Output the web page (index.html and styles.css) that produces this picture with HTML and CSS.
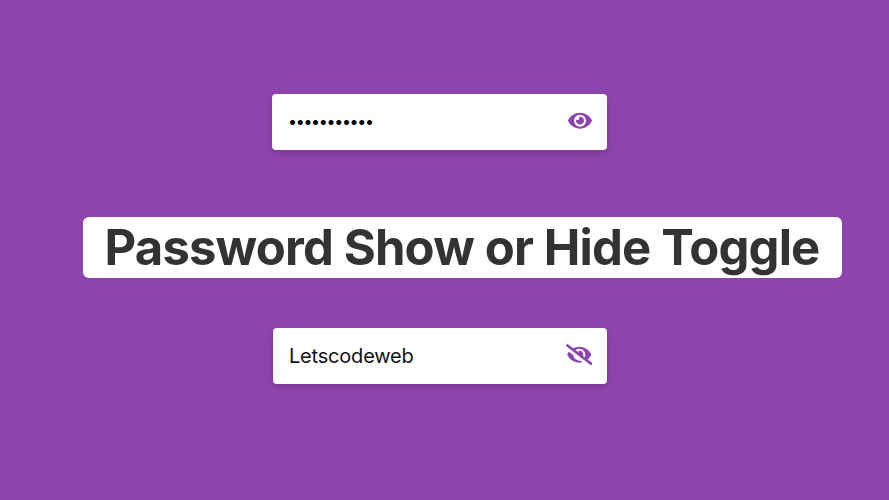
FILE: index.html
```html
<!DOCTYPE html>
<html lang="en">
<head>
<meta charset="utf-8">
<title>Password Show or Hide Toggle</title>
<link rel="stylesheet" href="styles.css">
</head>
<body>
<main class="page">
  <div class="field field-hidden">
    <span class="dots">•••••••••••</span>
    <svg class="eye" viewBox="0 0 576 512"><path d="M572.52 241.4C518.29 135.59 410.93 64 288 64S57.68 135.64 3.48 241.41a32.35 32.35 0 0 0 0 29.19C57.71 376.41 165.07 448 288 448s230.32-71.64 284.52-177.41a32.35 32.35 0 0 0 0-29.19zM288 400a144 144 0 1 1 144-144 143.93 143.93 0 0 1-144 144zm0-240a95.31 95.31 0 0 0-25.31 3.79 47.85 47.85 0 0 1-66.9 66.9A95.78 95.78 0 1 0 288 160z"/></svg>
  </div>
  <h1 class="title">Password Show or Hide Toggle</h1>
  <div class="field field-shown">
    <span class="value">Letscodeweb</span>
    <svg class="eye-slash" viewBox="0 0 640 512"><path d="M320 400c-75.85 0-137.25-58.71-142.9-133.11L72.2 185.82c-13.79 17.3-26.48 35.59-36.72 55.59a32.35 32.35 0 0 0 0 29.19C89.71 376.41 197.07 448 320 448c26.91 0 52.87-4 77.89-10.46L346 397.39a144.13 144.13 0 0 1-26 2.61zm313.82 58.1l-110.55-85.44a331.25 331.25 0 0 0 81.25-102.07 32.35 32.35 0 0 0 0-29.19C550.29 135.59 442.93 64 320 64a308.15 308.15 0 0 0-147.32 37.7L45.46 3.37A16 16 0 0 0 23 6.18L3.37 31.45A16 16 0 0 0 6.18 53.9l588.36 454.73a16 16 0 0 0 22.46-2.81l19.64-25.27a16 16 0 0 0-2.82-22.45zm-183.72-142l-39.3-30.38A94.75 94.75 0 0 0 416 256a94.76 94.76 0 0 0-121.31-92.21A47.65 47.65 0 0 1 304 192a46.64 46.64 0 0 1-1.54 10l-73.61-56.89A142.31 142.31 0 0 1 320 112a143.92 143.92 0 0 1 144 144c0 21.63-5.29 41.79-13.9 60.11z"/></svg>
  </div>
</main>
</body>
</html>
```
FILE: styles.css
```css
* {
  box-sizing: border-box;
}

body {
  margin: 0;
  background: #8e44ad;
  font-family: Inter, sans-serif;
}

.page {
  height: 500px;
  padding-top: 94px;
  display: flex;
  flex-direction: column;
  align-items: flex-start;
}

.field {
  display: flex;
  align-items: center;
  justify-content: space-between;
  height: 56px;
  padding: 0 14.6px 3px 16px;
  background: #fff;
  border-radius: 4px;
  box-shadow: 0 3px 6px rgba(0, 0, 0, 0.16);
}

.field-hidden {
  width: 335px;
  margin-left: 272px;
}

.field-shown {
  width: 334px;
  margin-left: 273px;
}

.field svg {
  fill: #8e44ad;
  display: block;
}

.eye {
  width: 24px;
  height: 21.3px;
}

.eye-slash {
  width: 26.6px;
  height: 21.3px;
}

.dots {
  font-size: 16px;
  letter-spacing: -1.3px;
  color: #000;
}

.value {
  padding-top: 3px;
  font-size: 20px;
  letter-spacing: -0.2px;
  color: #111;
}

.title {
  width: 759px;
  height: 61px;
  margin: 67px 0 50px 83px;
  padding-right: 1px;
  line-height: 61px;
  text-align: center;
  white-space: nowrap;
  font-size: 49px;
  font-weight: 700;
  letter-spacing: -0.84px;
  color: #333;
  background: #fff;
  border-radius: 6px;
}
```
